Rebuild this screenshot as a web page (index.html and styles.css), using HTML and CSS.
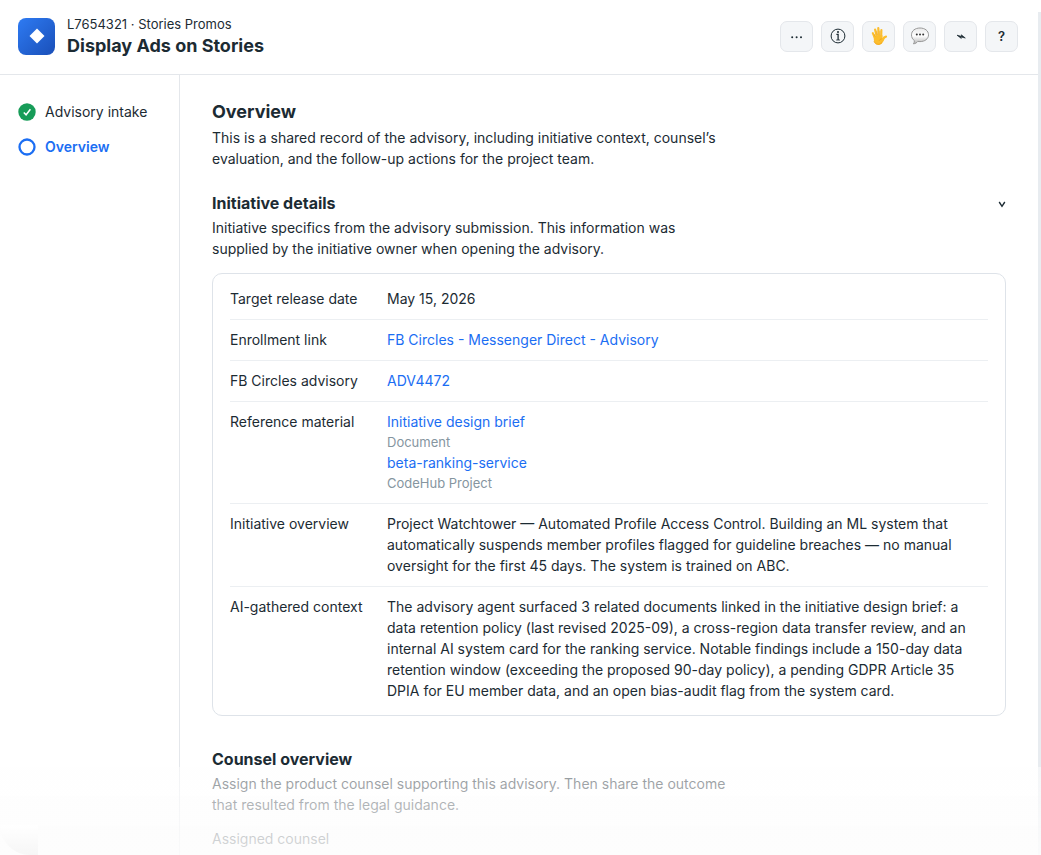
FILE: index.html
```html
<!DOCTYPE html>
<html lang="en">
<head>
    <meta charset="UTF-8">
    <meta name="viewport" content="width=device-width, initial-scale=1.0">
    <title>Display Ads on Stories</title>
    <link rel="stylesheet" href="styles.css">
</head>
<body>
    <div class="app">
        <header class="topbar">
            <div class="logo">
                <svg width="16" height="16" viewBox="0 0 16 16" aria-hidden="true"><path d="M8 .5 15.5 8 8 15.5.5 8z" fill="#fff"/></svg>
            </div>
            <div class="titles">
                <div class="crumb">L7654321 · Stories Promos</div>
                <h1>Display Ads on Stories</h1>
            </div>
            <div class="actions">
                <button type="button" class="icon-btn" aria-label="More">
                    <svg width="18" height="18" viewBox="0 0 18 18" fill="#1c2b33"><circle cx="4.2" cy="10.2" r="1"/><circle cx="8.6" cy="10.2" r="1"/><circle cx="13" cy="10.2" r="1"/></svg>
                </button>
                <button type="button" class="icon-btn" aria-label="Info">
                    <svg width="18" height="18" viewBox="0 0 18 18" fill="none" stroke="#1c2b33"><circle cx="9" cy="9" r="6.9"/><path d="M7.4 7.3H9.1V13" stroke-width="1.3"/><path d="M7.2 13h3.8" stroke-width=".8"/><circle cx="9" cy="4.9" r="1" fill="#1c2b33" stroke="none"/></svg>
                </button>
                <button type="button" class="icon-btn" aria-label="Raise hand">
                    <svg width="18" height="20" viewBox="0 0 18 20">
                        <g fill="none" stroke="#fcbe2d" stroke-linecap="round">
                            <path d="M2.8 7.2 4.9 12" stroke-width="2.1"/>
                            <path d="M5.1 3.6 6.7 10.5" stroke-width="2.2"/>
                            <path d="M8.3 2.2l.5 8" stroke-width="2.2"/>
                            <path d="M11.4 4 11.2 11" stroke-width="2.1"/>
                            <path d="M16 10.6c-1.5.2-2.5 1.3-3.3 3" stroke-width="2.2"/>
                        </g>
                        <path d="M3.8 9.8 12.3 9l.4 3.2 1.6-1.2.3 1.3c-.9 3.4-2.8 6.6-6 6.6-3.300 0-4.600-2.800-4.800-5.500z" fill="#fcbe2d"/>
                        <path d="M4.1 8l.9 2.500M6.700 4.800l.8 4.400M9.900 4.800v4.400M11.800 12.800c-1.400.1-2.300.9-2.700 2.100" fill="none" stroke="#e99a18" stroke-width=".6"/>
                        <path d="M4 15.200c1 3.200 5.400 4.400 8 1.300" fill="none" stroke="#f2a51f" stroke-width=".9"/>
                    </svg>
                </button>
                <button type="button" class="icon-btn" aria-label="Comments">
                    <svg width="20" height="20" viewBox="0 0 20 20">
                        <defs><linearGradient id="bubble" x1="0" y1="0" x2="0" y2="1"><stop offset="0" stop-color="#e8e8e8"/><stop offset=".5" stop-color="#fff"/><stop offset="1" stop-color="#b5b5b5"/></linearGradient></defs>
                        <path d="M10 2c4.900 0 8.500 2.800 8.500 6.800s-3.600 6.800-8.500 6.800c-.8 0-1.500-.1-2.200-.2-1 1.300-2.500 2.300-4.400 2.400.7-.9 1.100-2 1-3.200C2.500 13.400 1.500 11.200 1.500 8.800 1.500 4.800 5.100 2 10 2z" fill="url(#bubble)" stroke="#999"/>
                        <g fill="#333"><circle cx="6.800" cy="8.600" r="1"/><circle cx="10" cy="8.600" r="1"/><circle cx="13.200" cy="8.600" r="1"/></g>
                    </svg>
                </button>
                <button type="button" class="icon-btn" aria-label="Activity">
                    <svg width="18" height="18" viewBox="0 0 18 18"><path d="M5 8.200 9.800 9.400 9.300 7.800 13.300 11 8.800 9.900 9.300 11.400z" fill="#1c2b33" stroke="#1c2b33" stroke-width=".7"/></svg>
                </button>
                <button type="button" class="icon-btn" aria-label="Help">?</button>
            </div>
        </header>

        <div class="body">
            <nav class="steps">
                <a href="#intake" class="step">
                    <svg width="18" height="18" viewBox="0 0 18 18"><circle cx="9" cy="9" r="8.7" fill="#179c58"/><path d="M5.8 9.400 8.100 11.800 12.400 6.200" fill="none" stroke="#fff" stroke-width="1.500"/></svg>
                    Advisory intake
                </a>
                <a href="#overview" class="step active">
                    <svg width="18" height="18" viewBox="0 0 18 18"><circle cx="9" cy="9" r="7.500" fill="none" stroke="#1b6ef3" stroke-width="2.300"/></svg>
                    Overview
                </a>
            </nav>

            <main class="content">
                <section class="intro" id="overview">
                    <h2>Overview</h2>
                    <p>This is a shared record of the advisory, including initiative context, counsel’s evaluation, and the follow-up actions for the project team.</p>
                </section>

                <section class="details">
                    <div class="section-head">
                        <h3>Initiative details</h3>
                        <button type="button" class="toggle" aria-label="Collapse">
                            <svg width="8" height="8" viewBox="0 0 8 8"><path d="M1.200 2 4 6.300 6.800 2" fill="none" stroke="#1c2b33" stroke-width="1.400"/></svg>
                        </button>
                    </div>
                    <p>Initiative specifics from the advisory submission. This information was supplied by the initiative owner when opening the advisory.</p>

                    <dl class="card">
                        <div class="row">
                            <dt>Target release date</dt>
                            <dd>May 15, 2026</dd>
                        </div>
                        <div class="row">
                            <dt>Enrollment link</dt>
                            <dd><a href="#">FB Circles - Messenger Direct - Advisory</a></dd>
                        </div>
                        <div class="row">
                            <dt>FB Circles advisory</dt>
                            <dd><a href="#">ADV4472</a></dd>
                        </div>
                        <div class="row">
                            <dt>Reference material</dt>
                            <dd>
                                <a href="#">Initiative design brief</a>
                                <div class="kind">Document</div>
                                <a href="#">beta-ranking-service</a>
                                <div class="kind">CodeHub Project</div>
                            </dd>
                        </div>
                        <div class="row">
                            <dt>Initiative overview</dt>
                            <dd>Project Watchtower — Automated Profile Access Control. Building an ML system that automatically suspends member profiles flagged for guideline breaches — no manual oversight for the first 45 days. The system is trained on ABC.</dd>
                        </div>
                        <div class="row">
                            <dt>AI-gathered context</dt>
                            <dd>The advisory agent surfaced 3 related documents linked in the initiative design brief: a data retention policy (last revised 2025-09), a cross-region data transfer review, and an internal AI system card for the ranking service. Notable findings include a 150-day data retention window (exceeding the proposed 90-day policy), a pending GDPR Article 35 DPIA for EU member data, and an open bias-audit flag from the system card.</dd>
                        </div>
                    </dl>
                </section>

                <section class="counsel">
                    <h3>Counsel overview</h3>
                    <p>Assign the product counsel supporting this advisory. Then share the outcome that resulted from the legal guidance.</p>
                    <div class="field-label">Assigned counsel</div>
                </section>
            </main>
        </div>
    </div>
    <div class="fade"></div>
</body>
</html>
```
FILE: styles.css
```css
* { box-sizing: border-box; }
body {
    margin: 0;
    height: 100vh;
    overflow: hidden;
    background: #fff linear-gradient(#fff 12px, #e8ecf0 12px) right / 3px 100% no-repeat;
    color: #1c2b33;
    font: 14px/21px Inter, "Liberation Sans", sans-serif;
}
h1, h2, h3, p, dl, dd { margin: 0; }
a { color: #1b6ef3; text-decoration: none; }

.app {
    display: flex;
    flex-direction: column;
    height: 100vh;
    margin-right: 3px;
    background: #fff;
    overflow: hidden;
}

.topbar {
    display: flex;
    align-items: center;
    gap: 12px;
    flex: none;
    height: 75px;
    padding: 0 20px 2px 18px;
    border-bottom: 1px solid #e4e7eb;
}
.logo {
    display: grid;
    place-items: center;
    width: 37px;
    height: 37px;
    border-radius: 8px;
    background: linear-gradient(135deg, #2e7bf3, #1a4fb8);
}
.titles { flex: 1; }
.crumb { font-size: 13px; line-height: 20px; }
h1 { font-size: 18px; line-height: 24px; font-weight: 700; }
.actions { display: flex; gap: 8px; }
.icon-btn {
    display: grid;
    place-items: center;
    width: 33px;
    height: 31px;
    padding: 0;
    border: 1px solid #e4e7eb;
    border-radius: 7px;
    background: #f4f6f8;
    color: #1c2b33;
    font: 600 13px/20px Inter, sans-serif;
    cursor: pointer;
}

.body { display: flex; flex: 1; min-height: 0; }
.steps {
    display: flex;
    flex-direction: column;
    gap: 14px;
    width: 180px;
    flex: none;
    padding: 26px 18px;
    border-right: 1px solid #e4e7eb;
}
.step { display: flex; align-items: center; gap: 9px; color: #1c2b33; white-space: nowrap; }
.step.active { color: #1b6ef3; font-weight: 600; }

.content { flex: 1; min-width: 0; padding: 25px 32px 0; overflow: hidden; }
.content p { max-width: 520px; }
h2 { font-size: 18px; line-height: 24px; margin-bottom: 3px; }
h3 { font-size: 16px; line-height: 24px; margin-bottom: 2px; }
.intro { margin-bottom: 22px; }
.section-head { display: flex; align-items: center; justify-content: space-between; }
.toggle { display: grid; padding: 0; border: 0; background: none; cursor: pointer; }

.card {
    margin-top: 14px;
    padding: 5px 17px 4px;
    border: 1px solid #dee3e9;
    border-radius: 10px;
}
.row {
    display: grid;
    grid-template-columns: 137px 1fr;
    gap: 20px;
    padding: 9px 0 10px;
    border-bottom: 1px solid #eceff2;
}
.row:last-child { border-bottom: 0; }
dt { white-space: nowrap; }
dd a { display: block; }
.kind { color: #8595a0; font-size: 13px; line-height: 20px; }

.counsel { margin-top: 31px; }
.field-label { margin-top: 13px; }

/* fades the end of the page out */
.fade {
    position: fixed;
    left: 0;
    right: 0;
    bottom: 0;
    height: 88px;
    background: linear-gradient(rgba(255, 255, 255, .5), rgba(252, 252, 252, .86));
    pointer-events: none;
}
.fade::before {
    content: "";
    position: absolute;
    left: 0;
    bottom: 0;
    width: 38px;
    height: 30px;
    border-radius: 0 0 0 38px;
    background: linear-gradient(#fff, #f6f6f6);
}
```
